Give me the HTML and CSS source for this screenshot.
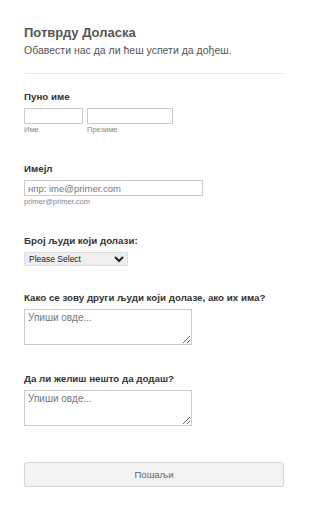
FILE: index.html
```html
<!DOCTYPE html>
<html lang="sr">
<head>
  <meta charset="UTF-8">
  <meta name="viewport" content="width=device-width, initial-scale=1.0">
  <title>Потврду Доласка</title>
  <link rel="stylesheet" href="styles.css">
</head>
<body>

  <form class="rsvp-form">
    <div class="form-header">
      <h1>Потврду Доласка</h1>
      <p>Обавести нас да ли ћеш успети да дођеш.</p>
    </div>

    <div class="field field-name">
      <label class="field-label">Пуно име</label>
      <div class="name-row">
        <div class="name-part">
          <input type="text" class="input-first">
          <span class="sublabel">Име</span>
        </div>
        <div class="name-part">
          <input type="text" class="input-last">
          <span class="sublabel">Презиме</span>
        </div>
      </div>
    </div>

    <div class="field field-email">
      <label class="field-label">Имејл</label>
      <input type="email" class="input-email" placeholder="нпр: ime@primer.com">
      <span class="sublabel">primer@primer.com</span>
    </div>

    <div class="field field-guests">
      <label class="field-label">Број људи који долази:</label>
      <select class="select-guests">
        <option>Please Select</option>
        <option>1</option>
        <option>2</option>
        <option>3</option>
      </select>
    </div>

    <div class="field field-others">
      <label class="field-label">Како се зову други људи који долазе, ако их има?</label>
      <textarea placeholder="Упиши овде..."></textarea>
    </div>

    <div class="field field-notes">
      <label class="field-label">Да ли желиш нешто да додаш?</label>
      <textarea placeholder="Упиши овде..."></textarea>
    </div>

    <div class="form-actions">
      <button type="submit">Пошаљи</button>
    </div>
  </form>

</body>
</html>
```

FILE: styles.css
```css
* {
  box-sizing: border-box;
  margin: 0;
  padding: 0;
  font-family: "Liberation Sans", Arial, sans-serif;
}

body {
  background-color: #fff;
  color: #555;
}

.rsvp-form {
  display: flex;
  flex-direction: column;
  width: 260px;
  margin-left: 24px;
  padding-top: 25px;
}

.form-header {
  padding-bottom: 16px;
  border-bottom: 1px solid #ececec;
}

.form-header h1 {
  font-size: 13px;
  line-height: 16px;
  color: #555;
}

.form-header p {
  margin-top: 3px;
  font-size: 10.5px;
  line-height: 13px;
  color: #555;
}

.field {
  display: flex;
  flex-direction: column;
  align-items: flex-start;
}

.field-label {
  font-size: 9.75px;
  font-weight: bold;
  line-height: 12px;
  color: #333;
  margin-bottom: 5px;
}

.field-name {
  margin-top: 17px;
}

.name-row {
  display: flex;
  gap: 4px;
}

.name-part {
  display: flex;
  flex-direction: column;
}

.sublabel {
  font-size: 7.5px;
  line-height: 9px;
  color: #888;
  margin-top: 1px;
}

input {
  height: 16px;
  border: 1px solid #ccc;
  background: #fff;
  padding: 0 3px;
  font-size: 9.5px;
  color: #555;
}

input::placeholder,
textarea::placeholder {
  color: #777;
}

.input-first {
  width: 59px;
}

.input-last {
  width: 86px;
}

.field-email {
  margin-top: 29px;
}

.input-email {
  width: 179px;
}

.field-guests {
  margin-top: 29px;
}

.select-guests {
  width: 104px;
  height: 14px;
  font-size: 8.5px;
  color: #222;
  border: 1px solid #ddd;
  background: #efefef;
  border-radius: 1px;
}

.field-others {
  margin-top: 26px;
}

.field-notes {
  margin-top: 28px;
}

textarea {
  width: 168px;
  height: 36px;
  border: 1px solid #ccc;
  padding: 2px 3px;
  font-size: 10px;
  color: #555;
}

.form-actions {
  margin-top: 36px;
}

.form-actions button {
  width: 100%;
  height: 25px;
  border: 1px solid #d4d4d4;
  border-radius: 3px;
  background: #f3f3f3;
  color: #666;
  font-size: 9.5px;
  box-shadow: 0 1px 1px rgba(0, 0, 0, 0.08);
}
```
